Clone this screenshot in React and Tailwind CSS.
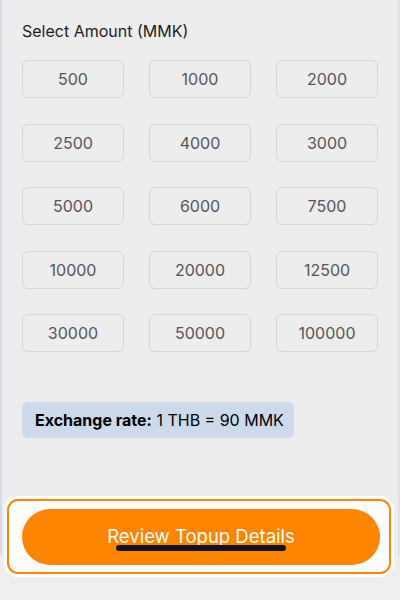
import React, { useState } from "react";

const amounts = [
    500, 1000, 2000,
    2500, 4000, 3000,
    5000, 6000, 7500,
    10000, 20000, 12500,
    30000, 50000, 100000,
];

export default function App() {
    const [selected, setSelected] = useState(null);

    return (
        <div
            className="relative h-[600px] w-[400px] overflow-hidden bg-[#eeeeee]"
            style={{ fontFamily: "Inter, 'Noto Sans', sans-serif" }}
        >
            <div className="h-[555px] border-l-2 border-r-2 border-l-[#dcdae9] border-r-[#e2e2e2] bg-[#ededed] px-[20px] pt-[21px]">
                <h2 className="text-[16px] leading-[20px] text-[#1c1c1e]">Select Amount (MMK)</h2>

                <div className="mt-[19px] grid grid-cols-3 gap-x-[25px] gap-y-[25.5px]">
                    {amounts.map((amount) => (
                        <button
                            key={amount}
                            onClick={() => setSelected(amount)}
                            className={`h-[38px] rounded-[6px] border text-[16px] text-[#555559] ${
                                selected === amount
                                    ? "border-[#ff8500] bg-[#fff3e6]"
                                    : "border-[#d6d6d6] bg-[#ededed]"
                            }`}
                        >
                            {amount}
                        </button>
                    ))}
                </div>

                <div className="mt-[50px] h-[36px] w-[272px] whitespace-nowrap rounded-[6px] bg-[#ccdaeb] px-[13px] text-[16px] leading-[36px] text-black">
                    <span className="font-bold">Exchange rate:</span> 1 THB = 90 MMK
                </div>
            </div>

            {/* bottom action bar */}
            <div className="absolute left-[4px] top-[496px] h-[81px] w-[390px] rounded-[14px] bg-white p-[3px]">
                <div className="flex h-full items-center rounded-[11px] border-2 border-[#ff8500] pl-[13px] pr-[9px]">
                    <button className="h-[56px] w-full rounded-full bg-[#ff8500] text-[18.5px] text-white">
                        Review Topup Details
                    </button>
                </div>
            </div>

            <div className="absolute left-[116px] top-[545px] h-[6px] w-[170px] rounded-full bg-[#111418]" />
        </div>
    );
}
